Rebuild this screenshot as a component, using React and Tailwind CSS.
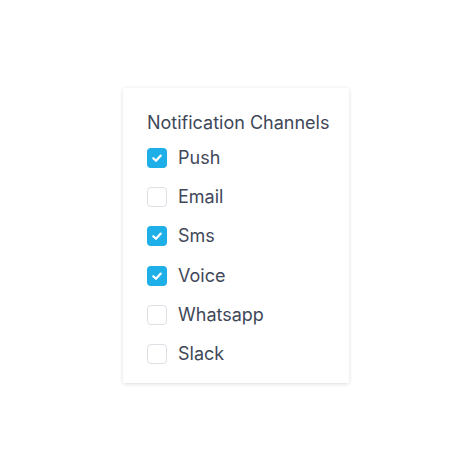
import React from "react";

const items = [
  { label: "Push", checked: true },
  { label: "Email", checked: false },
  { label: "Sms", checked: true },
  { label: "Voice", checked: true },
  { label: "Whatsapp", checked: false },
  { label: "Slack", checked: false },
];

function Box({ checked }) {
  if (checked) {
    return (
      <span className="flex h-[20px] w-[20px] shrink-0 items-center justify-center rounded-[4px] bg-[#1eaee8]">
        <svg width="12" height="12" viewBox="0 0 12 12" fill="none">
          <path d="M2.3 6.2 L5 8.8 L9.8 3.6" stroke="white" strokeWidth="2.2" strokeLinecap="round" strokeLinejoin="round" />
        </svg>
      </span>
    );
  }
  return <span className="block h-[20px] w-[20px] shrink-0 rounded-[4px] border border-[#dcdfe4] bg-white" />;
}

export default function App() {
  return (
    <div className="flex h-[474px] w-[474px] items-start justify-center bg-white" style={{ fontFamily: "Inter, sans-serif" }}>
      <div className="ml-[-2px] mt-[88px] w-[226px] h-[295px] bg-white shadow-[0_1px_4px_rgba(0,0,0,0.14)] pl-[24px] pt-[22px]">
        <div className="text-[18px] leading-[26px] text-[#3f4859]">Notification Channels</div>
        <div className="mt-[12px] flex flex-col gap-[19.2px]">
          {items.map((it) => (
            <label key={it.label} className="flex h-[20px] items-center gap-[11px]">
              <Box checked={it.checked} />
              <span className="text-[18px] leading-[20px] text-[#3f4859]">{it.label}</span>
            </label>
          ))}
        </div>
      </div>
    </div>
  );
}
